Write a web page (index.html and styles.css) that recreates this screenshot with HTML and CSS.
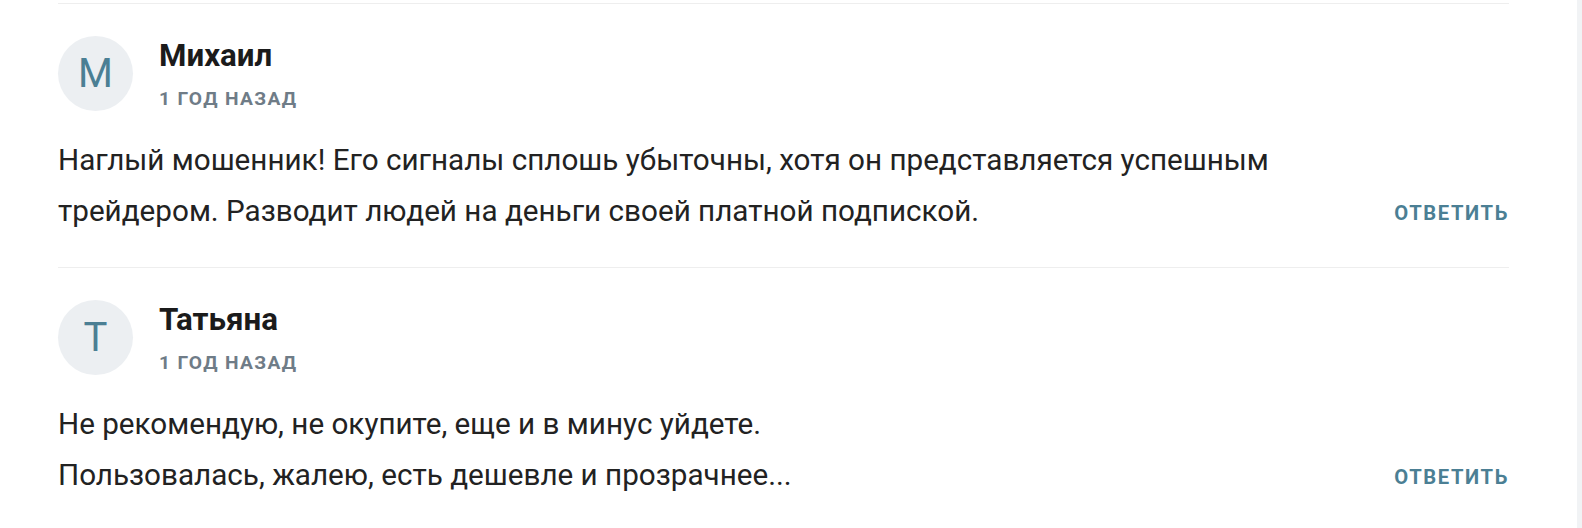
FILE: index.html
```html
<!DOCTYPE html>
<html lang="ru">
<head>
<meta charset="utf-8">
<link rel="stylesheet" href="styles.css">
</head>
<body>
<div class="page">
  <main class="comments">
    <article class="comment">
      <header class="comment-head">
        <div class="avatar">М</div>
        <div class="meta">
          <div class="name">Михаил</div>
          <div class="date">1 год назад</div>
        </div>
      </header>
      <div class="comment-body">
        <p class="text">Наглый мошенник! Его сигналы сплошь убыточны, хотя он представляется успешным трейдером. Разводит людей на деньги своей платной подпиской.</p>
        <a class="reply" href="#">Ответить</a>
      </div>
    </article>
    <article class="comment">
      <header class="comment-head">
        <div class="avatar">Т</div>
        <div class="meta">
          <div class="name">Татьяна</div>
          <div class="date">1 год назад</div>
        </div>
      </header>
      <div class="comment-body">
        <p class="text">Не рекомендую, не окупите, еще и в минус уйдете.<br>Пользовалась, жалею, есть дешевле и прозрачнее...</p>
        <a class="reply" href="#">Ответить</a>
      </div>
    </article>
  </main>
  <div class="scrolltrack"></div>
</div>
</body>
</html>
```
FILE: styles.css
```css
html, body {
  margin: 0;
  padding: 0;
  background: #ffffff;
  height: 100%;
}
body {
  font-family: Roboto, "Liberation Sans", Arial, sans-serif;
  color: #222222;
}
.page {
  display: flex;
  min-height: 528px;
}
.comments {
  flex: 1;
  padding: 3px 68px 0 58px;
  background: #ffffff;
}
.scrolltrack {
  width: 5px;
  background: #f1f3f5;
}
.comment {
  border-top: 1px solid #eeeeee;
  padding: 32px 0 31px;
}
.comment-head {
  display: flex;
  align-items: flex-start;
  gap: 26px;
}
.avatar {
  width: 75px;
  height: 75px;
  border-radius: 50%;
  background: #eceff2;
  color: #4b7f94;
  font-size: 40px;
  display: flex;
  align-items: center;
  justify-content: center;
  flex-shrink: 0;
}
.meta {
  display: flex;
  flex-direction: column;
  padding-top: 2px;
}
.name {
  font-size: 31.3px;
  font-weight: 700;
  color: #1b1b1b;
  line-height: 36px;
}
.date {
  margin-top: 14px;
  font-size: 19.2px;
  font-weight: 700;
  letter-spacing: 0.07em;
  text-transform: uppercase;
  color: #6f7c87;
  line-height: 22px;
}
.comment-body {
  display: flex;
  align-items: flex-end;
  justify-content: space-between;
  margin-top: 23px;
  gap: 40px;
}
.text {
  margin: 0;
  font-size: 29.65px;
  line-height: 51px;
  max-width: 1250px;
}
.reply {
  font-size: 20.2px;
  font-weight: 700;
  letter-spacing: 0.08em;
  text-transform: uppercase;
  color: #4b7f94;
  text-decoration: none;
  line-height: 22px;
  margin-bottom: 12px;
  white-space: nowrap;
}
```
